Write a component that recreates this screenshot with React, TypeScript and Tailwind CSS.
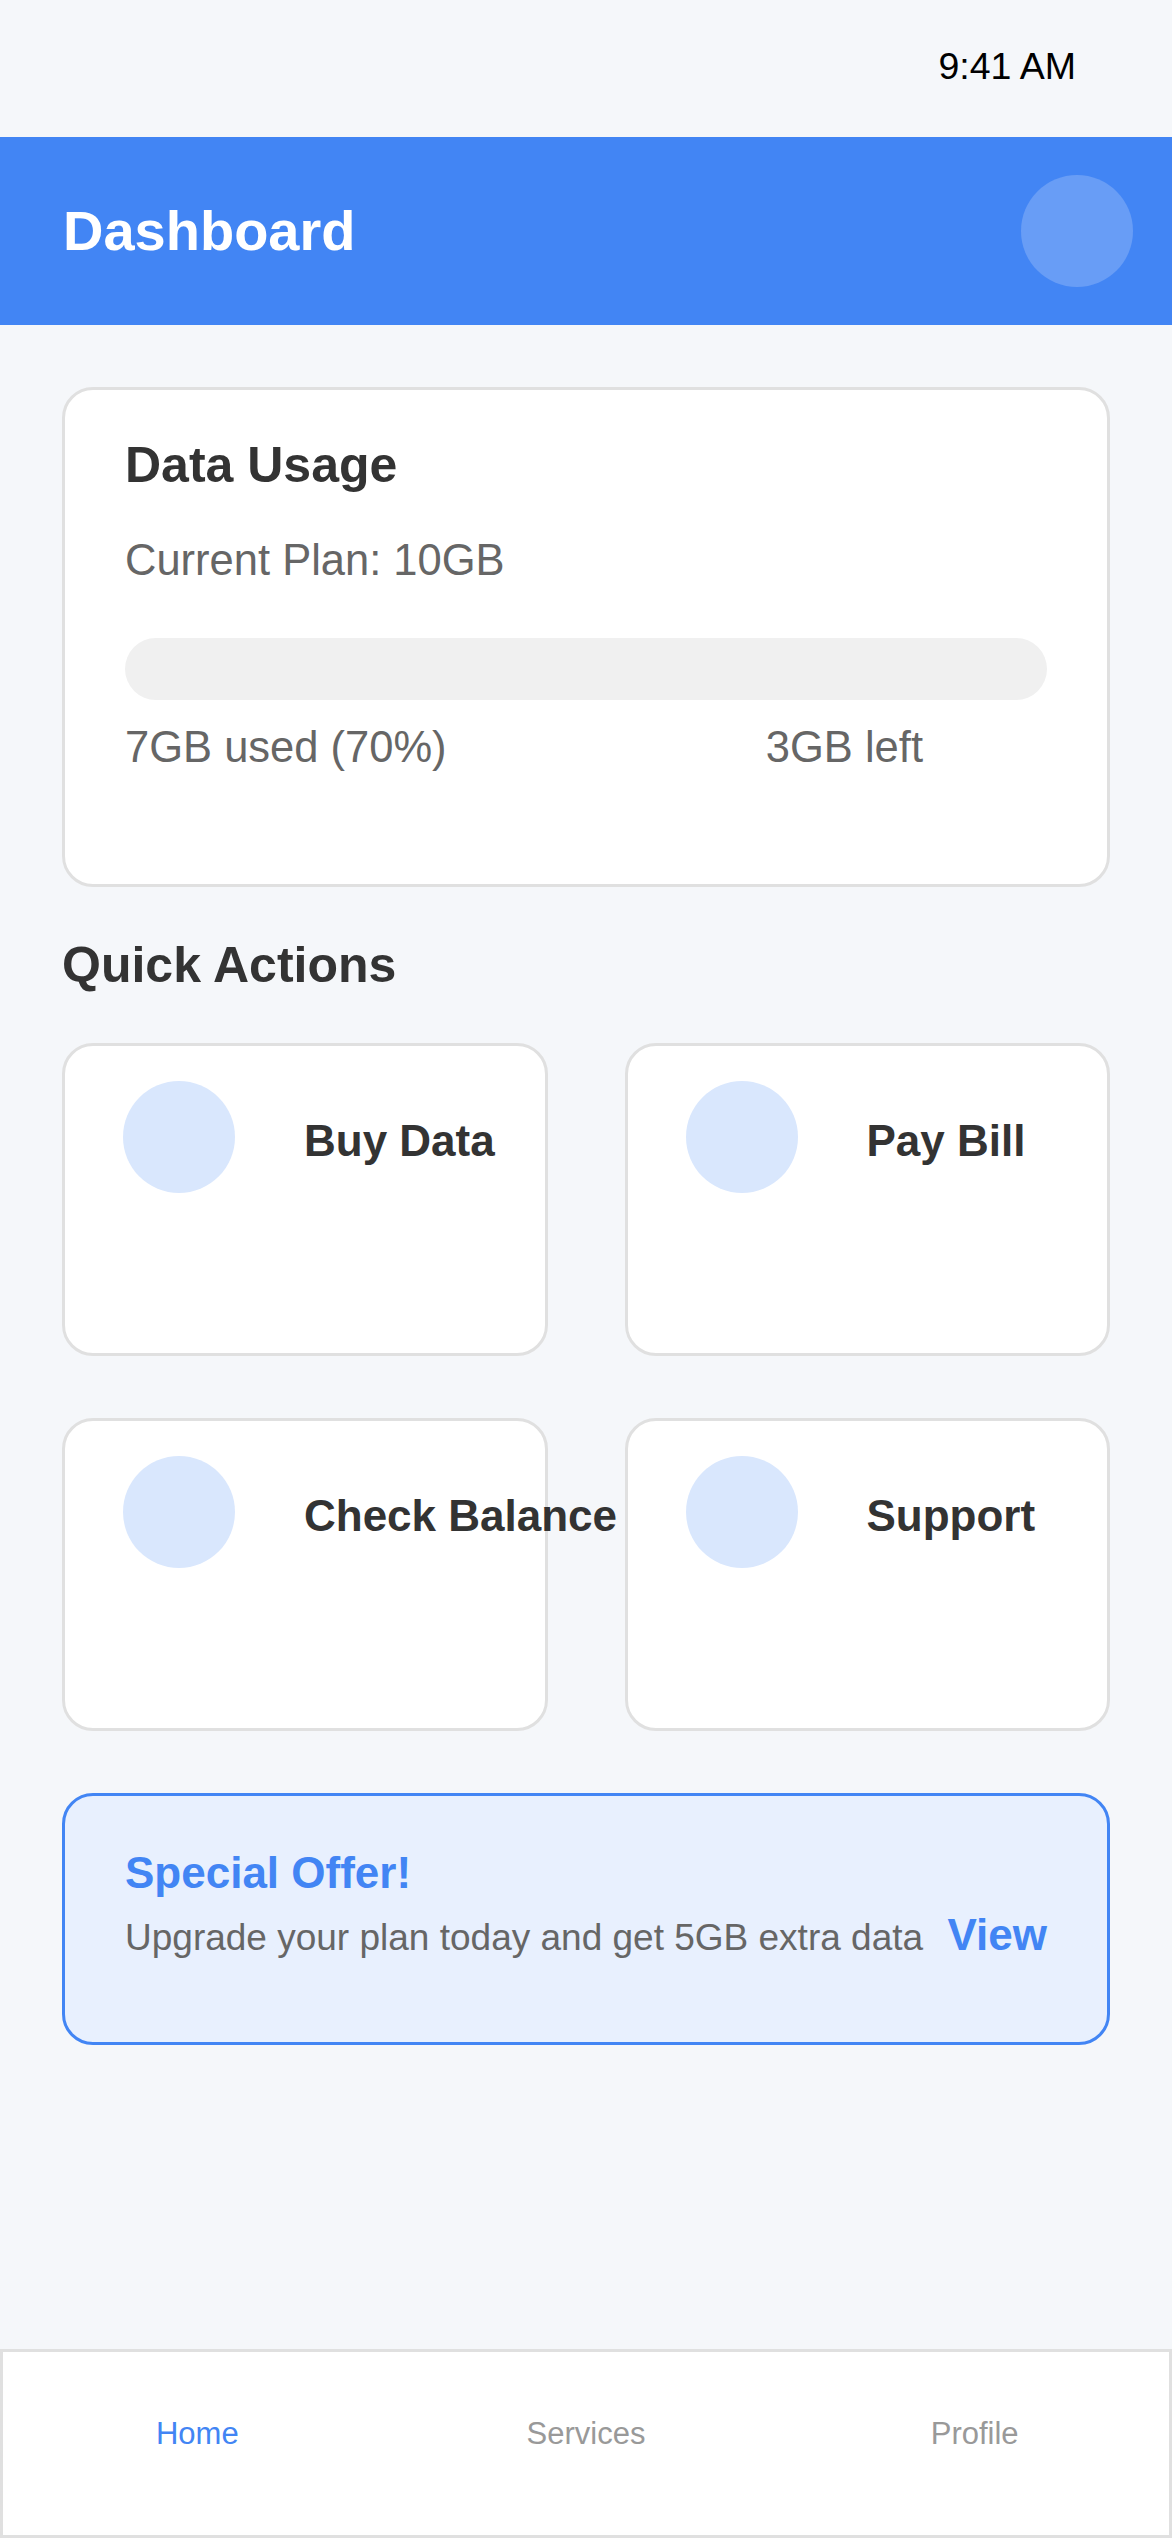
const actions = ["Buy Data", "Pay Bill", "Check Balance", "Support"];

const navItems = [
	{ label: "Home", active: true },
	{ label: "Services", active: false },
	{ label: "Profile", active: false },
];

const App = () => {
	return (
		<div className="min-h-screen flex flex-col bg-[#f5f7fa] font-['Liberation_Sans',Arial,sans-serif]">
			{/* status bar */}
			<div className="h-[137px] flex items-center justify-end pr-[96px] pb-[6px]">
				<p className="text-[37.5px] leading-[44px] text-black">9:41 AM</p>
			</div>

			{/* header */}
			<div className="h-[188px] bg-[#4285f4] flex items-center justify-between pl-[63px] pr-[39px]">
				<h1 className="text-white text-[56px] leading-[64px] font-bold">Dashboard</h1>
				<div className="w-[112px] h-[112px] rounded-full bg-[#689df6]" />
			</div>

			<div className="flex-1 px-[62px] pt-[62px]">
				{/* data usage */}
				<div className="bg-white border-[3px] border-[#e0e0e0] rounded-[31px] px-[60px] pt-[45px] pb-[111px]">
					<h2 className="text-[#333] text-[50px] leading-[60px] font-bold">Data Usage</h2>
					<p className="mt-[39px] text-[#666] text-[43.5px] leading-[52px]">
						Current Plan: 10GB
					</p>
					<div className="mt-[52px] h-[62px] rounded-full bg-[#f0f0f0]" />
					<div className="mt-[21px] flex justify-between pr-[124px] text-[#666] text-[43.5px] leading-[52px]">
						<span>7GB used (70%)</span>
						<span>3GB left</span>
					</div>
				</div>

				{/* quick actions */}
				<h2 className="mt-[48px] text-[#333] text-[50px] leading-[60px] font-bold">
					Quick Actions
				</h2>
				<div className="mt-[48px] grid grid-cols-2 gap-x-[77px] gap-y-[62px]">
					{actions.map((label) => (
						<div
							key={label}
							className="h-[313px] bg-white border-[3px] border-[#e0e0e0] rounded-[31px] pl-[58px] pt-[35px]"
						>
							<div className="flex items-center">
								<div className="w-[112px] h-[112px] shrink-0 rounded-full bg-[#d9e7fd]" />
								<p className="ml-[69px] pt-[7px] whitespace-nowrap text-[#333] text-[44px] leading-[52px] font-bold">
									{label}
								</p>
							</div>
						</div>
					))}
				</div>

				{/* offer */}
				<div className="mt-[62px] bg-[#e8f0fe] border-[3px] border-[#4285f4] rounded-[31px] px-[60px] pt-[51px] pb-[81px]">
					<h3 className="text-[#4285f4] text-[44px] leading-[52px] font-bold">Special Offer!</h3>
					<div className="mt-[10px] flex items-baseline justify-between">
						<p className="text-[#666] text-[37px] leading-[44px]">
							Upgrade your plan today and get 5GB extra data
						</p>
						<button className="text-[#4285f4] text-[44px] leading-[52px] font-bold">View</button>
					</div>
				</div>
			</div>

			{/* bottom nav */}
			<div className="h-[189px] bg-white border-[3px] border-[#e0e0e0] flex pb-[20px]">
				{navItems.map((item) => (
					<div key={item.label} className="flex-1 flex items-center justify-center">
						<span
							className={
								item.active
									? "text-[#4285f4] text-[31px] leading-[36px]"
									: "text-[#999] text-[31px] leading-[36px]"
							}
						>
							{item.label}
						</span>
					</div>
				))}
			</div>
		</div>
	);
};

export default App;
